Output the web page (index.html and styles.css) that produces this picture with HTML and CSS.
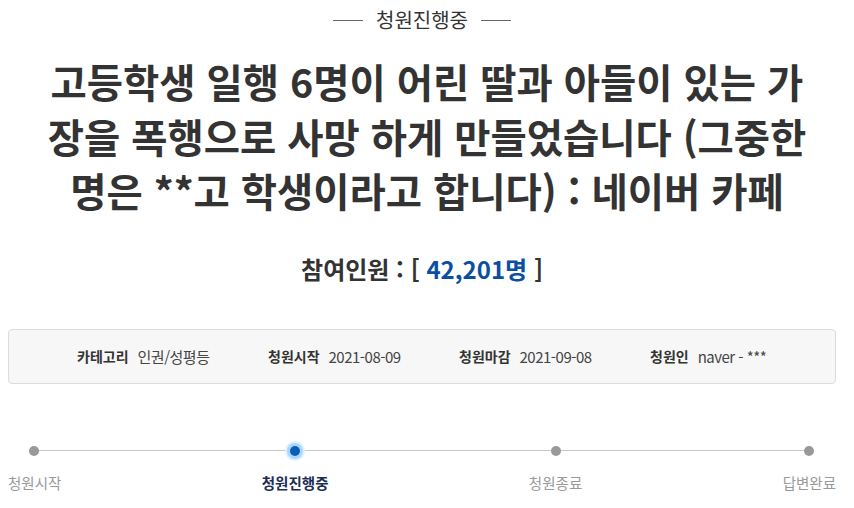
FILE: index.html
```html
<!DOCTYPE html>
<html lang="ko">
<head>
<meta charset="utf-8">
<link rel="stylesheet" href="styles.css">
</head>
<body>
<div class="page">
  <div class="status"><span class="dash"></span><span class="status-text">청원진행중</span><span class="dash"></span></div>
  <h1 class="title">고등학생 일행 6명이 어린 딸과 아들이 있는 가장을 폭행으로 사망 하게 만들었습니다 (그중한 명은 **고 학생이라고 합니다) : 네이버 카페</h1>
  <div class="count">참여인원 : [ <span class="num">42,201명</span> ]</div>
  <div class="info">
    <div class="item"><span class="label">카테고리</span><span class="value">인권/성평등</span></div>
    <div class="item"><span class="label">청원시작</span><span class="value">2021-08-09</span></div>
    <div class="item"><span class="label">청원마감</span><span class="value">2021-09-08</span></div>
    <div class="item"><span class="label">청원인</span><span class="value">naver - ***</span></div>
  </div>
  <div class="progress">
    <div class="track"></div>
    <div class="step first"><span class="dot"></span><span class="step-label">청원시작</span></div>
    <div class="step active"><span class="dot"></span><span class="step-label">청원진행중</span></div>
    <div class="step"><span class="dot"></span><span class="step-label">청원종료</span></div>
    <div class="step last"><span class="dot"></span><span class="step-label">답변완료</span></div>
  </div>
</div>
</body>
</html>
```
FILE: styles.css
```css
* { box-sizing: border-box; }
html, body { margin: 0; padding: 0; background: #fff; }
body {
  font-family: "Noto Sans CJK KR", "Noto Sans", sans-serif;
  color: #333;
  width: 854px;
  height: 508px;
  overflow: hidden;
}
.page { padding: 0 18px 0 8px; }
.status {
  display: flex;
  justify-content: center;
  align-items: center;
  gap: 13px;
  height: 40px;
}
.dash { width: 30px; height: 1px; background: #666; }
.status-text { font-size: 20px; color: #333; line-height: 26px; }
.title {
  margin: 14px -18px 0 -8px;
  text-align: center;
  font-size: 39.4px;
  font-weight: 700;
  line-height: 54.5px;
  color: #333;
  padding: 0 40px;
}
.count {
  margin-top: 35px;
  text-align: center;
  font-size: 24px;
  font-weight: 700;
  line-height: 32px;
  color: #333;
}
.num { color: #0b4ea2; }
.info {
  margin-top: 44px;
  height: 55px;
  background: #f7f7f7;
  border: 1px solid #dcdcdc;
  border-radius: 4px;
  display: flex;
  align-items: center;
  padding-left: 68px;
  font-size: 14px;
}
.item { flex: 0 0 191px; display: flex; align-items: center; gap: 9px; white-space: nowrap; }
.label { font-weight: 700; color: #333; }
.value { color: #444; font-size: 15px; letter-spacing: -0.5px; }
.progress {
  position: relative;
  margin-top: 56px;
  display: flex;
  justify-content: space-between;
}
.track {
  position: absolute;
  left: 25px;
  right: 26px;
  top: 10px;
  height: 1px;
  background: #c8c8c8;
}
.step {
  position: relative;
  display: flex;
  flex-direction: column;
  align-items: center;
  gap: 17px;
}
.step.first { align-items: flex-start; }
.step.first .dot { margin-left: 21px; }
.step.last { align-items: flex-end; }
.step.last .dot { margin-right: 22px; }
.dot {
  width: 10px;
  height: 10px;
  margin-top: 6px;
  border-radius: 50%;
  background: #999;
}
.step.active .dot {
  background: #0b5cb8;
  box-shadow: 0 0 0 3px #a8d8ff, 0 0 0 5px #dff0ff;
}
.step-label { font-size: 14.5px; color: #999; line-height: 20px; }
.step.active .step-label { color: #1c2d57; font-weight: 700; }
```
